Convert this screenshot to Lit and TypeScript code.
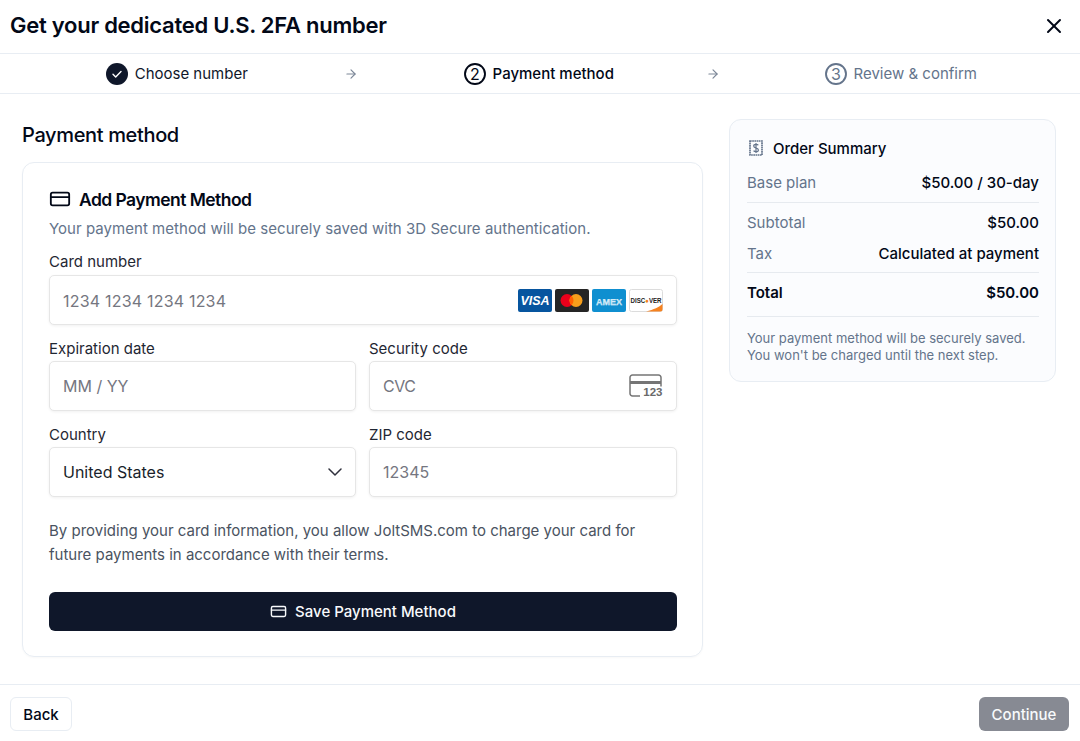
import { LitElement, html, css } from "lit";
import { customElement } from "lit/decorators.js";

const cardIcon = (size: number, sw: number) => html`<svg class="cardico" width=${size} height=${size} viewBox="0 0 24 24" fill="none" stroke="currentColor" stroke-width=${sw} stroke-linecap="round" stroke-linejoin="round"><rect x="2" y="5" width="20" height="14" rx="2"/><line x1="2" y1="10" x2="22" y2="10"/></svg>`;
const arrow = html`<svg class="arrow" width="14" height="14" viewBox="0 0 24 24" fill="none" stroke="currentColor" stroke-width="2" stroke-linecap="round" stroke-linejoin="round"><path d="M5 12h14"/><path d="m12 5 7 7-7 7"/></svg>`;

@customElement("app-root")
export class AppRoot extends LitElement {
  static styles = css`
    :host { display: flex; flex-direction: column; height: 741px; width: 1080px; overflow: hidden; background: #fff; font-family: Inter, "Liberation Sans", sans-serif; color: #0f172a; }
    * { box-sizing: border-box; }
    .top { height: 53px; display: flex; align-items: center; justify-content: space-between; padding: 0 14px 4px 10px; flex: none; }
    h1 { margin: 0; font-size: 22px; font-weight: 600; color: #020817; line-height: 28px; letter-spacing: -0.26px; }
    .close { display: block; color: #020817; margin-top: 2px; }
    .steps { flex: none; height: 41px; border-top: 1px solid #e8edf3; border-bottom: 1px solid #e8edf3; display: grid; grid-template-columns: 334px 28px 334px 28px 334px; padding: 0 10px; align-items: center; font-size: 15px; }
    .step { display: flex; align-items: center; justify-content: center; gap: 6.5px; color: #0f172a; }
    .step.active { color: #020817; font-weight: 500; }
    .step.todo { color: #64748b; }
    .arrow { color: #7c8798; display: block; }
    .body { flex: 1; min-height: 0; display: grid; grid-template-columns: 681px 327px; gap: 26px; padding: 25px 24px 0 22px; align-items: start; }
    h2 { margin: 0 0 11px; font-size: 20px; line-height: 32px; font-weight: 500; color: #020817; letter-spacing: -0.35px; }
    .card { border: 1px solid #e8edf3; border-radius: 12px; height: 495px; padding: 24px 25px 0 26px; box-shadow: 0 1px 2px rgba(15,23,42,.03); }
    .cardhead { display: flex; align-items: center; gap: 8px; height: 24px; font-size: 17.5px; font-weight: 600; letter-spacing: -0.55px; color: #020817; }
    .sub { margin: 6px 0 0; font-size: 15px; line-height: 24px; color: #64748b; letter-spacing: 0.04px; }
    .label { display: block; font-size: 15px; line-height: 18px; color: #1f2733; margin-bottom: 3px; }
    .label.first { margin-top: 12px; margin-bottom: 4px; }
    .field { height: 50px; border: 1px solid #e6e6e6; border-radius: 5px; box-shadow: 0 1px 3px rgba(0,0,0,.06); display: flex; align-items: center; justify-content: space-between; padding: 0 13px; font-size: 16px; color: #757680; background: #fff; }
    .field.val { color: #1a1f2b; }
    .wide { letter-spacing: 0.2px; padding-top: 2px; }
    .narrow { letter-spacing: -0.5px; }
    .grid { display: grid; grid-template-columns: 307px 308px; gap: 15px 13px; margin-top: 15px; }
    .logos { display: flex; gap: 3px; }
    .logos svg { display: block; }
    .terms { margin: 22px 0 0; font-size: 15px; line-height: 24px; color: #4a5361; }
    .save { margin-top: 25px; height: 39px; border-radius: 6px; background: #0f172a; color: #f8fafc; display: flex; align-items: center; justify-content: center; gap: 8px; font-size: 15px; font-weight: 500; }
    .summary { border: 1px solid #e8edf3; border-radius: 12px; background: #fbfcfe; height: 263px; padding: 16px 16px 0 17px; }
    .sumhead { display: flex; align-items: center; gap: 9px; height: 24px; padding-left: 1px; font-size: 15px; font-weight: 500; color: #020817; }
    .sumhead svg { color: #64748b; display: block; }
    .row { display: flex; justify-content: space-between; align-items: center; font-size: 15px; color: #64748b; font-weight: 400; height: 24px; margin-top: 7px; }
    .row b { font-weight: 500; color: #020817; }
    .row.r1 { margin-top: 10px; }
    .rule { height: 1px; background: #e6eaef; margin-top: 7px; }
    .rule.first { margin-top: 8px; }
    .rule.last { margin-top: 12px; }
    .row.total, .row.total b { color: #020817; font-weight: 600; }
    .note { margin: 13px 0 0; font-size: 13px; line-height: 17px; color: #64748b; }
    .foot { flex: none; height: 57px; border-top: 1px solid #e8edf3; display: flex; align-items: center; justify-content: space-between; padding: 2px 11px 0 10px; font-size: 15px; font-weight: 500; }
    .back { height: 34px; width: 62px; border: 1px solid #e8edf3; border-radius: 6px; display: flex; align-items: center; justify-content: center; color: #020817; background: #fff; }
    .cont { height: 34px; width: 90px; border-radius: 6px; display: flex; align-items: center; justify-content: center; background: #878a93; color: #f8fafc; }
  `;

  private logos() {
    return html`<div class="logos">
      <svg width="34" height="23" viewBox="0 0 34 23"><rect width="34" height="23" rx="2" fill="#07559f"/><text x="17" y="16" text-anchor="middle" font-family="Liberation Sans" font-size="12.500" font-weight="700" font-style="italic" fill="#fff">VISA</text></svg>
      <svg width="34" height="23" viewBox="0 0 34 23"><rect width="34" height="23" rx="2" fill="#252525"/><circle cx="12" cy="11.500" r="6.500" fill="#eb001b"/><circle cx="21" cy="11.500" r="6.500" fill="#f79e1b"/><path d="M16.500 6.800a6.500 6.500 0 0 1 0 9.400a6.500 6.500 0 0 1 0-9.400z" fill="#ff5f00"/></svg>
      <svg width="34" height="23" viewBox="0 0 34 23"><rect width="34" height="23" rx="2" fill="#0f8fd0"/><text x="17" y="15.500" text-anchor="middle" font-family="Liberation Sans" font-size="9.500" font-weight="700" textLength="26" lengthAdjust="spacingAndGlyphs" fill="#bfe2f5" stroke="#fff" stroke-width=".25">AMEX</text></svg>
      <svg width="34" height="23" viewBox="0 0 34 23"><rect x=".5" y=".5" width="33" height="22" rx="2" fill="#fff" stroke="#dcdcdc"/><path d="M17 22.500 C25 20.500 30 18 33.500 15 V20.500 a2 2 0 0 1-2 2z" fill="#f58220"/><text x="17" y="13.500" text-anchor="middle" font-family="Liberation Sans" font-size="6.500" font-weight="700" textLength="31" lengthAdjust="spacingAndGlyphs" fill="#222">DISC<tspan fill="#f58220">●</tspan>VER</text></svg>
    </div>`;
  }

  render() {
    return html`
      <div class="top">
        <h1>Get your dedicated U.S. 2FA number</h1>
        <svg class="close" width="24" height="24" viewBox="0 0 24 24" fill="none" stroke="currentColor" stroke-width="2" stroke-linecap="round"><path d="M18 6 6 18"/><path d="m6 6 12 12"/></svg>
      </div>
      <div class="steps">
        <div class="step">
          <svg width="22" height="22" viewBox="0 0 22 22"><circle cx="11" cy="11" r="11" fill="#0f172a"/><path d="M7 11.300l2.700 2.700L15 8.600" fill="none" stroke="#fff" stroke-width="1.400" stroke-linecap="round" stroke-linejoin="round"/></svg>
          <span>Choose number</span>
        </div>
        ${arrow}
        <div class="step active">
          <svg width="22" height="22" viewBox="0 0 22 22"><circle cx="11" cy="11" r="10" fill="none" stroke="#020817" stroke-width="1.900"/><text x="11" y="17" text-anchor="middle" font-family="Inter" font-size="16" font-weight="400" fill="#020817">2</text></svg>
          <span>Payment method</span>
        </div>
        ${arrow}
        <div class="step todo">
          <svg width="22" height="22" viewBox="0 0 22 22"><circle cx="11" cy="11" r="10" fill="none" stroke="#64748b" stroke-width="1.900"/><text x="11" y="17" text-anchor="middle" font-family="Inter" font-size="16" font-weight="400" fill="#64748b">3</text></svg>
          <span>Review &amp; confirm</span>
        </div>
      </div>
      <div class="body">
        <div>
          <h2>Payment method</h2>
          <div class="card">
            <div class="cardhead">${cardIcon(22, 2)}<span>Add Payment Method</span></div>
            <p class="sub">Your payment method will be securely saved with 3D Secure authentication.</p>
            <label class="label first">Card number</label>
            <div class="field"><span class="wide">1234 1234 1234 1234</span>${this.logos()}</div>
            <div class="grid">
              <div><label class="label">Expiration date</label><div class="field"><span>MM / YY</span></div></div>
              <div><label class="label">Security code</label><div class="field"><span class="narrow">CVC</span>
                <svg width="34" height="24" viewBox="0 0 34 24" fill="none"><path d="M11 22H3.500a2.500 2.500 0 0 1-2.500-2.500V3.500A2.500 2.500 0 0 1 3.500 1h26A2.500 2.500 0 0 1 32 3.500v9" stroke="#757575" stroke-width="1.500"/><rect x="1" y="7" width="31" height="3" fill="#757575"/><text x="33.500" y="22" text-anchor="end" font-family="Liberation Sans" font-size="11.500" font-weight="700" fill="#6a6a6a">123</text></svg>
              </div></div>
              <div><label class="label">Country</label><div class="field val"><span>United States</span>
                <svg width="14" height="14" viewBox="0 0 14 14" fill="none" stroke="#30313d" stroke-width="1.500" stroke-linecap="round" stroke-linejoin="round"><path d="M1 4l6 6 6-6"/></svg>
              </div></div>
              <div><label class="label">ZIP code</label><div class="field"><span>12345</span></div></div>
            </div>
            <p class="terms">By providing your card information, you allow JoltSMS.com to charge your card for future payments in accordance with their terms.</p>
            <div class="save">${cardIcon(17, 2)}<span>Save Payment Method</span></div>
          </div>
        </div>
        <div class="summary">
          <div class="sumhead">
            <svg width="16" height="16" viewBox="0 0 16 16" fill="none" stroke="currentColor" stroke-width="1.700"><path d="M2 1h12v14H2z" stroke-dasharray="1.700 .5"/><path d="M10.300 5.300C9.900 4.600 9 4.300 8 4.300c-1.300 0-2.300.6-2.300 1.800S6.800 7.600 8 8s2.400.7 2.400 1.900S9.300 11.700 8 11.700c-1 0-2-.4-2.400-1.100M8 3v10" stroke-width="1.200"/></svg>
            <span>Order Summary</span>
          </div>
          <div class="row r1"><span>Base plan</span><b>$50.00 / 30-day</b></div>
          <div class="rule first"></div>
          <div class="row"><span>Subtotal</span><b>$50.00</b></div>
          <div class="row"><span>Tax</span><b>Calculated at payment</b></div>
          <div class="rule"></div>
          <div class="row total"><span>Total</span><b>$50.00</b></div>
          <div class="rule last"></div>
          <p class="note">Your payment method will be securely saved.<br>You won't be charged until the next step.</p>
        </div>
      </div>
      <div class="foot"><div class="back">Back</div><div class="cont">Continue</div></div>
    `;
  }
}
